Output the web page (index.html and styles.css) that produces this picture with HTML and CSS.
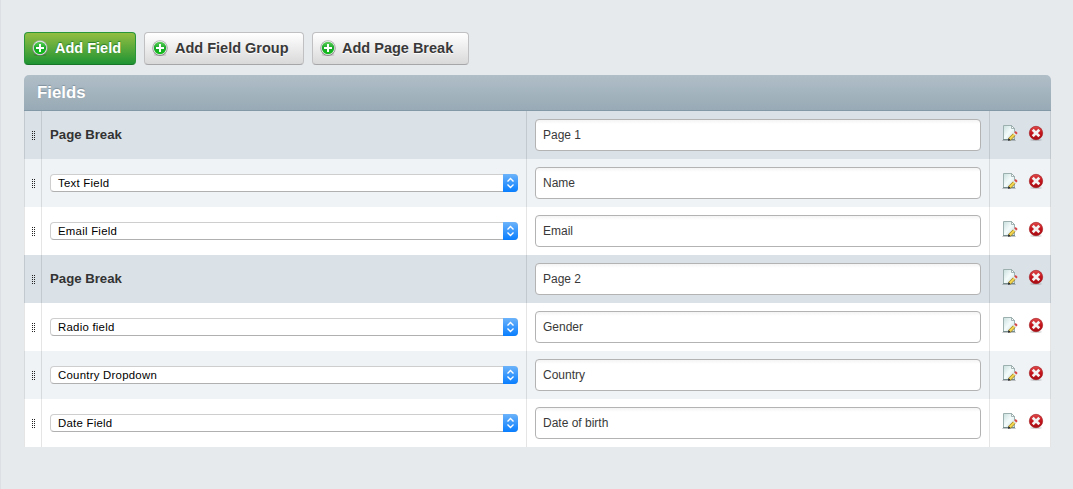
FILE: index.html
```
<!DOCTYPE html>
<html lang="en">
<head>
<meta charset="utf-8">
<title>Fields</title>
<link rel="stylesheet" href="styles.css">
</head>
<body>
<svg class="defs" width="0" height="0" aria-hidden="true">
  <defs>
    <linearGradient id="green" x1="0" y1="0" x2="0" y2="1"><stop offset="0" stop-color="#5fcf5c"/><stop offset=".5" stop-color="#17a827"/><stop offset="1" stop-color="#14c01c"/></linearGradient>
    <linearGradient id="ring" x1="0" y1="0" x2="0" y2="1"><stop offset="0" stop-color="#b5b5b5"/><stop offset="1" stop-color="#757575"/></linearGradient>
    <linearGradient id="red" x1="0" y1="0" x2="0" y2="1"><stop offset="0" stop-color="#e04a4a"/><stop offset=".5" stop-color="#c4141c"/><stop offset="1" stop-color="#a80d14"/></linearGradient>
    <linearGradient id="paper" x1="0" y1="0" x2="1" y2="1"><stop offset="0" stop-color="#c8dfdc"/><stop offset=".5" stop-color="#f4fbfb"/><stop offset="1" stop-color="#c8dcdc"/></linearGradient>
  </defs>
  <symbol id="add" viewBox="0 0 16 16">
    <ellipse cx="8" cy="15" rx="6.5" ry="1" fill="#000" opacity=".15"/>
    <circle cx="8" cy="8" r="7.7" fill="url(#ring)"/>
    <circle cx="8" cy="8" r="6.9" fill="#eef3ee"/>
    <circle cx="8" cy="8" r="6.2" fill="url(#green)"/>
    <path d="M8 4v8M4 8h8" stroke="#fff" stroke-width="2"/>
  </symbol>
  <symbol id="edit" viewBox="0 0 16 16">
    <path d="M0 15.5h14" stroke="#000" opacity=".15"/>
    <path d="M1.5.5h8l3 3v11h-11z" fill="url(#paper)" stroke="#9db0b0"/>
    <path d="M1 14.700h12" stroke="#6b8080"/>
    <path d="M9.500.5v3h3z" fill="#fff" stroke="#8fa3a3" stroke-width=".8"/>
    <path d="M7.400 14.400l5-5" stroke="#a58424" stroke-width="3.400"/>
    <path d="M7.600 14.200l4.800-4.800" stroke="#f3d850" stroke-width="2"/>
    <path d="M6 15.800l.5-2.700 2.200 2.200z" fill="#222"/>
    <path d="M12.200 9.600l1.300-1.300" stroke="#e6e6e6" stroke-width="3"/>
    <path d="M13.300 8.500l1.400-1.400" stroke="#d64545" stroke-width="2.800"/>
  </symbol>
  <symbol id="delete" viewBox="0 0 16 16">
    <ellipse cx="8" cy="15" rx="6" ry=".9" fill="#000" opacity=".16"/>
    <circle cx="8" cy="8" r="6.700" fill="url(#red)" stroke="#9e1218" stroke-width=".6"/>
    <path d="M4.700 4.700l6.600 6.600M11.300 4.700l-6.600 6.600" stroke="#f3f3f3" stroke-width="2.700"/>
  </symbol>
  <symbol id="grip" viewBox="0 0 3 9">
    <path d="M.5 0v9M2.500 0v9" stroke="#222" stroke-dasharray="1 1"/>
  </symbol>
  <symbol id="arrows" viewBox="0 0 15 18">
    <path d="M4.500 7.600l3-3 3 3M4.500 10.600l3 3 3-3" fill="none" stroke="#fff" stroke-width="1.400"/>
  </symbol>
</svg>
<main class="editor">
  <div class="toolbar">
    <button class="button button-primary"><svg><use href="#add"/></svg><span>Add Field</span></button>
    <button class="button button-group"><svg><use href="#add"/></svg><span>Add Field Group</span></button>
    <button class="button button-break"><svg><use href="#add"/></svg><span>Add Page Break</span></button>
  </div>
  <section class="grid">
    <h2 class="heading">Fields</h2>
    <div class="row break"><div class="handle"><svg><use href="#grip"/></svg></div><div class="type"><strong>Page Break</strong></div><div class="name"><input value="Page 1"></div><div class="actions"><svg><use href="#edit"/></svg><svg><use href="#delete"/></svg></div></div>
    <div class="row alt"><div class="handle"><svg><use href="#grip"/></svg></div><div class="type"><div class="select"><span>Text Field</span><svg><use href="#arrows"/></svg></div></div><div class="name"><input value="Name"></div><div class="actions"><svg><use href="#edit"/></svg><svg><use href="#delete"/></svg></div></div>
    <div class="row"><div class="handle"><svg><use href="#grip"/></svg></div><div class="type"><div class="select"><span>Email Field</span><svg><use href="#arrows"/></svg></div></div><div class="name"><input value="Email"></div><div class="actions"><svg><use href="#edit"/></svg><svg><use href="#delete"/></svg></div></div>
    <div class="row break"><div class="handle"><svg><use href="#grip"/></svg></div><div class="type"><strong>Page Break</strong></div><div class="name"><input value="Page 2"></div><div class="actions"><svg><use href="#edit"/></svg><svg><use href="#delete"/></svg></div></div>
    <div class="row"><div class="handle"><svg><use href="#grip"/></svg></div><div class="type"><div class="select"><span>Radio field</span><svg><use href="#arrows"/></svg></div></div><div class="name"><input value="Gender"></div><div class="actions"><svg><use href="#edit"/></svg><svg><use href="#delete"/></svg></div></div>
    <div class="row alt"><div class="handle"><svg><use href="#grip"/></svg></div><div class="type"><div class="select"><span>Country Dropdown</span><svg><use href="#arrows"/></svg></div></div><div class="name"><input value="Country"></div><div class="actions"><svg><use href="#edit"/></svg><svg><use href="#delete"/></svg></div></div>
    <div class="row"><div class="handle"><svg><use href="#grip"/></svg></div><div class="type"><div class="select"><span>Date Field</span><svg><use href="#arrows"/></svg></div></div><div class="name"><input value="Date of birth"></div><div class="actions"><svg><use href="#edit"/></svg><svg><use href="#delete"/></svg></div></div>
  </section>
</main>
</body>
</html>
```
FILE: styles.css
```
* { box-sizing: border-box; }
body {
  margin: 0;
  height: 489px;
  overflow: hidden;
  background: #e6eaed;
  color: #333;
  font: 12px "Liberation Sans", Arial, sans-serif;
}
.defs { display: block; height: 0; }
.editor { height: 489px; padding: 32px 22px 0 23px; border-left: 1px solid #dcdfe3; }
.toolbar { display: flex; gap: 8px; margin-bottom: 10px; }
.button {
  display: flex;
  align-items: center;
  gap: 7px;
  width: 112px;
  height: 33px;
  padding: 0 0 1px 7px;
  border: 1px solid #c0c0c2;
  border-bottom-color: #a6a6a8;
  border-radius: 4px;
  background: linear-gradient(#fff, #d9d9d9);
  color: #393939;
  font: bold 14.5px "Liberation Sans", Arial, sans-serif;
  white-space: nowrap;
  text-shadow: 0 1px 1px #fff;
}
.button svg { width: 16px; height: 16px; flex: none; }
.button-primary {
  border-color: #29963a;
  border-bottom-color: #187528;
  background: linear-gradient(#93be42, #1f9433);
  color: #fff;
  text-shadow: 0 -1px 1px #287b2c;
}
.button-group { width: 160px; }
.button-break { width: 157px; gap: 6px; }
.heading {
  height: 36px;
  margin: 0;
  padding-left: 13px;
  border-bottom: 1px solid #8399a7;
  border-radius: 5px 5px 0 0;
  background: linear-gradient(#b0bec7, #98aab6);
  color: #fff;
  font-size: 16.8px;
  line-height: 36px;
  text-shadow: 0 -1px 1px #80929e;
}
.row {
  display: grid;
  grid-template-columns: 18px 485px 463px 61px;
  height: 48px;
  background: #fff;
}
.row > div {
  display: flex;
  align-items: center;
  border-right: 1px solid rgba(0, 0, 0, .1);
}
.row > .handle { padding-left: 7px; border-left: 1px solid rgba(0, 0, 0, .1); }
.row.alt { background: #f0f3f6; }
.row.break { background: #dae1e7; }
.handle svg { width: 3px; height: 9px; margin-top: 1px; }
.type { padding: 0 8px; }
.type strong { font-size: 13.2px; padding-bottom: 1px; }
.name { padding: 0 8px; }
.name input {
  width: 100%;
  height: 32px;
  padding: 0 7px;
  border: 1px solid #b3b3b3;
  border-radius: 4px;
  background: linear-gradient(#f4f4f4, #fff 4px);
  color: #393939;
  font: 12px "Liberation Sans", Arial, sans-serif;
}
.select {
  display: flex;
  align-items: center;
  justify-content: space-between;
  width: 100%;
  height: 18px;
  border: 1px solid #cecece;
  border-bottom-color: #b0b0b0;
  border-radius: 4px;
  background: #fff;
  padding-left: 7px;
  color: #000;
  font-size: 11.4px;
  letter-spacing: .25px;
}
.select svg {
  width: 15px;
  height: 18px;
  margin-right: -1px;
  flex: none;
  border-radius: 0 4px 4px 0;
  background: linear-gradient(#6cb3fa, #087eff);
}
.actions { gap: 10px; padding: 0 0 4px 12px; }
.actions svg { width: 16px; height: 16px; flex: none; }
```
